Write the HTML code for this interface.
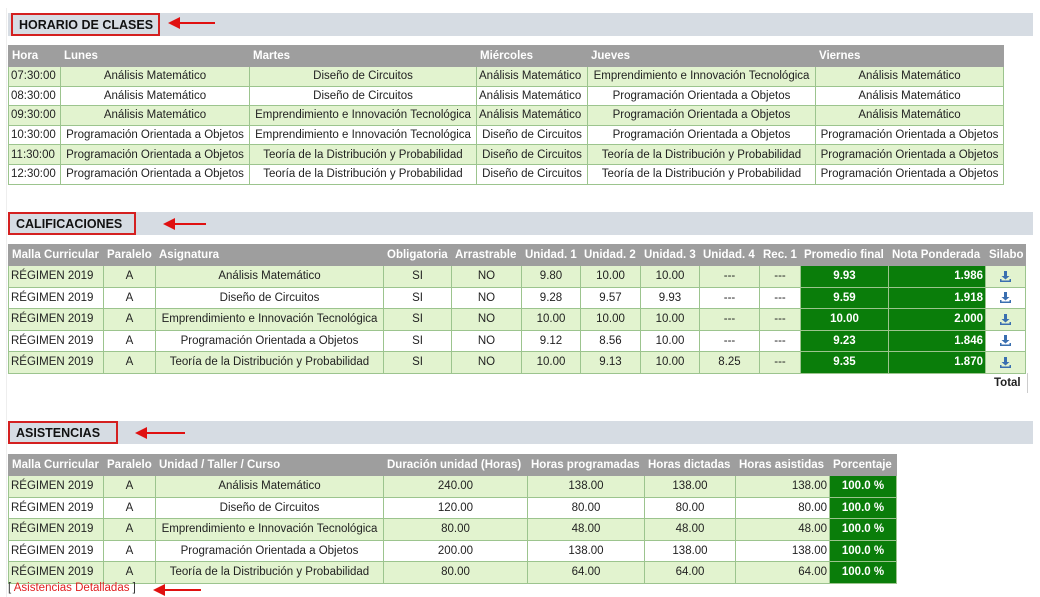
<!DOCTYPE html>
<html><head><meta charset="utf-8"><style>
body{margin:0;width:1040px;height:597px;background:#fff;font-family:"Liberation Sans",sans-serif;font-size:11.5px;line-height:14px;color:#222;position:relative;overflow:hidden}
.bar{position:absolute;left:8px;width:1025px;height:23px;background:#d6dce3}
.lbl{position:absolute;border:2px solid #d42020;box-sizing:border-box;font-weight:bold;font-size:12.5px;color:#111;padding:3px 0 0 6px;height:23px}
.arr{position:absolute;height:2px;background:#e01010}
.arr:before{content:"";position:absolute;left:-2px;top:-5px;border-right:12px solid #e01010;border-top:6px solid transparent;border-bottom:6px solid transparent}
table{position:absolute;border-collapse:collapse;table-layout:fixed}
td,th{border:1px solid #9cc48e;padding:0 2px;white-space:nowrap;overflow:hidden;text-align:center}
th{background:#9e9e9e;color:#fff;text-align:left;font-weight:bold;border-color:#9e9e9e;height:20px;padding:0 3px}
tr.g td{background:#e2f3cf}
td.l{text-align:left}
td.r{text-align:right}
td.d{background:#0a7d0a!important;color:#fff;font-weight:bold}
.h td{height:18.6px}
.c td{height:20.5px}
.ic{display:inline-block;width:11px;height:11px;vertical-align:middle}
</style></head><body>
<div style="position:absolute;left:6px;top:8px;width:1px;height:589px;background:#eee"></div>
<div class="bar" style="top:13px"></div>
<div class="lbl" style="left:11px;top:13px;width:149px">HORARIO DE CLASES</div>
<div class="arr" style="left:170px;top:22px;width:45px"></div>
<table class="h" style="left:8px;top:45px;width:995px">
<colgroup><col style="width:52px"><col style="width:189px"><col style="width:227px"><col style="width:111px"><col style="width:228px"><col style="width:188px"></colgroup>
<tr><th>Hora</th><th>Lunes</th><th>Martes</th><th>Miércoles</th><th>Jueves</th><th>Viernes</th></tr>
<tr class="g"><td class="l">07:30:00</td><td>Análisis Matemático</td><td>Diseño de Circuitos</td><td class="l">Análisis Matemático</td><td>Emprendimiento e Innovación Tecnológica</td><td>Análisis Matemático</td></tr>
<tr><td class="l">08:30:00</td><td>Análisis Matemático</td><td>Diseño de Circuitos</td><td class="l">Análisis Matemático</td><td>Programación Orientada a Objetos</td><td>Análisis Matemático</td></tr>
<tr class="g"><td class="l">09:30:00</td><td>Análisis Matemático</td><td>Emprendimiento e Innovación Tecnológica</td><td class="l">Análisis Matemático</td><td>Programación Orientada a Objetos</td><td>Análisis Matemático</td></tr>
<tr><td class="l">10:30:00</td><td>Programación Orientada a Objetos</td><td>Emprendimiento e Innovación Tecnológica</td><td>Diseño de Circuitos</td><td>Programación Orientada a Objetos</td><td>Programación Orientada a Objetos</td></tr>
<tr class="g"><td class="l">11:30:00</td><td>Programación Orientada a Objetos</td><td>Teoría de la Distribución y Probabilidad</td><td>Diseño de Circuitos</td><td>Teoría de la Distribución y Probabilidad</td><td>Programación Orientada a Objetos</td></tr>
<tr><td class="l">12:30:00</td><td>Programación Orientada a Objetos</td><td>Teoría de la Distribución y Probabilidad</td><td>Diseño de Circuitos</td><td>Teoría de la Distribución y Probabilidad</td><td>Programación Orientada a Objetos</td></tr>
</table>

<div class="bar" style="top:212px"></div>
<div class="lbl" style="left:8px;top:212px;width:128px">CALIFICACIONES</div>
<div class="arr" style="left:165px;top:223px;width:41px"></div>
<table class="c" style="left:8px;top:244px;width:1017px">
<colgroup><col style="width:95px"><col style="width:52px"><col style="width:228px"><col style="width:68px"><col style="width:70px"><col style="width:59px"><col style="width:60px"><col style="width:59px"><col style="width:60px"><col style="width:41px"><col style="width:88px"><col style="width:97px"><col style="width:40px"></colgroup>
<tr><th>Malla Curricular</th><th>Paralelo</th><th>Asignatura</th><th>Obligatoria</th><th>Arrastrable</th><th>Unidad. 1</th><th>Unidad. 2</th><th>Unidad. 3</th><th>Unidad. 4</th><th>Rec. 1</th><th>Promedio final</th><th>Nota Ponderada</th><th>Silabo</th></tr>
<tr class="g"><td class="l">RÉGIMEN 2019</td><td>A</td><td>Análisis Matemático</td><td>SI</td><td>NO</td><td>9.80</td><td>10.00</td><td>10.00</td><td>---</td><td>---</td><td class="d">9.93</td><td class="d r">1.986</td><td><svg class="ic" viewBox="0 0 11 11"><path d="M4 0h3v5h2.5L5.5 8.5 1.5 5H4z M0 8v3h11V8h-1.5v1.5h-8V8z" fill="#3a6fb0"/></svg></td></tr>
<tr><td class="l">RÉGIMEN 2019</td><td>A</td><td>Diseño de Circuitos</td><td>SI</td><td>NO</td><td>9.28</td><td>9.57</td><td>9.93</td><td>---</td><td>---</td><td class="d">9.59</td><td class="d r">1.918</td><td><svg class="ic" viewBox="0 0 11 11"><path d="M4 0h3v5h2.5L5.5 8.5 1.5 5H4z M0 8v3h11V8h-1.5v1.5h-8V8z" fill="#3a6fb0"/></svg></td></tr>
<tr class="g"><td class="l">RÉGIMEN 2019</td><td>A</td><td>Emprendimiento e Innovación Tecnológica</td><td>SI</td><td>NO</td><td>10.00</td><td>10.00</td><td>10.00</td><td>---</td><td>---</td><td class="d">10.00</td><td class="d r">2.000</td><td><svg class="ic" viewBox="0 0 11 11"><path d="M4 0h3v5h2.5L5.5 8.5 1.5 5H4z M0 8v3h11V8h-1.5v1.5h-8V8z" fill="#3a6fb0"/></svg></td></tr>
<tr><td class="l">RÉGIMEN 2019</td><td>A</td><td>Programación Orientada a Objetos</td><td>SI</td><td>NO</td><td>9.12</td><td>8.56</td><td>10.00</td><td>---</td><td>---</td><td class="d">9.23</td><td class="d r">1.846</td><td><svg class="ic" viewBox="0 0 11 11"><path d="M4 0h3v5h2.5L5.5 8.5 1.5 5H4z M0 8v3h11V8h-1.5v1.5h-8V8z" fill="#3a6fb0"/></svg></td></tr>
<tr class="g"><td class="l">RÉGIMEN 2019</td><td>A</td><td>Teoría de la Distribución y Probabilidad</td><td>SI</td><td>NO</td><td>10.00</td><td>9.13</td><td>10.00</td><td>8.25</td><td>---</td><td class="d">9.35</td><td class="d r">1.870</td><td><svg class="ic" viewBox="0 0 11 11"><path d="M4 0h3v5h2.5L5.5 8.5 1.5 5H4z M0 8v3h11V8h-1.5v1.5h-8V8z" fill="#3a6fb0"/></svg></td></tr>
</table>
<div style="position:absolute;left:994px;top:376px;font-weight:bold">Total</div>
<div style="position:absolute;left:1027px;top:373px;width:1px;height:20px;background:#ccc"></div>

<div class="bar" style="top:421px"></div>
<div class="lbl" style="left:8px;top:421px;width:110px">ASISTENCIAS</div>
<div class="arr" style="left:137px;top:432px;width:48px"></div>
<table class="c" style="left:8px;top:454px;width:888px">
<colgroup><col style="width:95px"><col style="width:52px"><col style="width:228px"><col style="width:144px"><col style="width:117px"><col style="width:91px"><col style="width:94px"><col style="width:67px"></colgroup>
<tr><th>Malla Curricular</th><th>Paralelo</th><th>Unidad / Taller / Curso</th><th>Duración unidad (Horas)</th><th>Horas programadas</th><th>Horas dictadas</th><th>Horas asistidas</th><th>Porcentaje</th></tr>
<tr class="g"><td class="l">RÉGIMEN 2019</td><td>A</td><td>Análisis Matemático</td><td>240.00</td><td>138.00</td><td>138.00</td><td class="r">138.00</td><td class="d">100.0 %</td></tr>
<tr><td class="l">RÉGIMEN 2019</td><td>A</td><td>Diseño de Circuitos</td><td>120.00</td><td>80.00</td><td>80.00</td><td class="r">80.00</td><td class="d">100.0 %</td></tr>
<tr class="g"><td class="l">RÉGIMEN 2019</td><td>A</td><td>Emprendimiento e Innovación Tecnológica</td><td>80.00</td><td>48.00</td><td>48.00</td><td class="r">48.00</td><td class="d">100.0 %</td></tr>
<tr><td class="l">RÉGIMEN 2019</td><td>A</td><td>Programación Orientada a Objetos</td><td>200.00</td><td>138.00</td><td>138.00</td><td class="r">138.00</td><td class="d">100.0 %</td></tr>
<tr class="g"><td class="l">RÉGIMEN 2019</td><td>A</td><td>Teoría de la Distribución y Probabilidad</td><td>80.00</td><td>64.00</td><td>64.00</td><td class="r">64.00</td><td class="d">100.0 %</td></tr>
</table>
<div style="position:absolute;left:8px;top:581px;font-size:11.5px;color:#333">[ <span style="color:#e02020">Asistencias Detalladas</span> ]</div>
<div class="arr" style="left:155px;top:589px;width:46px"></div>
</body></html>
